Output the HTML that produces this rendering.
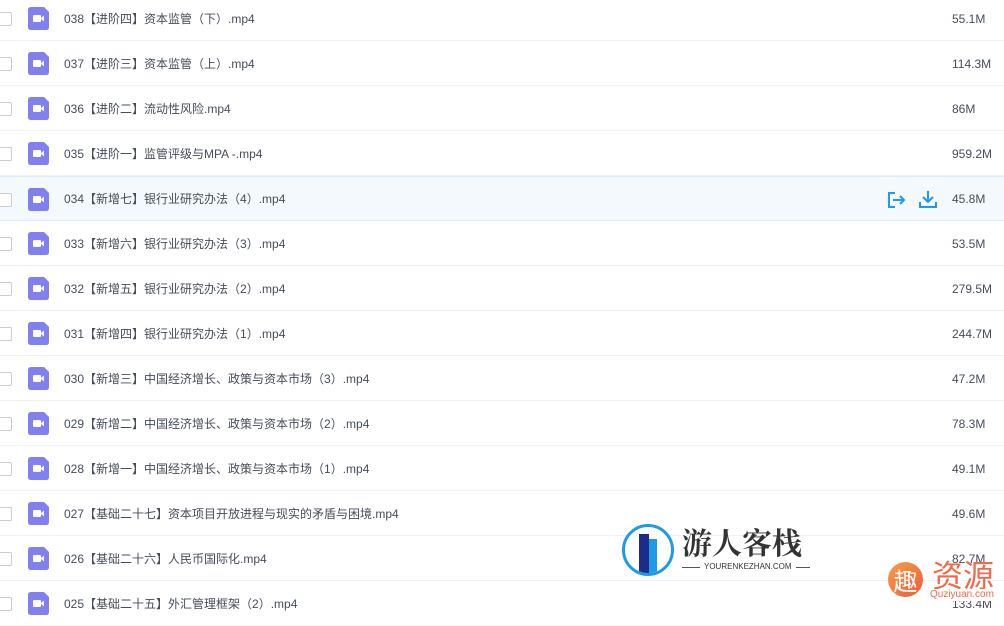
<!DOCTYPE html>
<html><head><meta charset="utf-8"><style>
body{margin:0;width:1004px;height:602px;overflow:hidden;background:#fff;font-family:"Liberation Sans","Noto Sans CJK SC",sans-serif;position:relative}
.row{position:absolute;left:0;width:1004px;height:44px;border-bottom:1px solid #f1f2f5}
.row.hl{background:#f4f9fe;border-top:1px solid #dceefc;border-bottom:1px solid #dceefc;height:43px}
.cb{position:absolute;left:-2px;top:16px;width:12px;height:12px;border:1px solid #c8ccd4;border-radius:2px;background:#fff}
.ic{position:absolute;left:28px;top:11px;width:21px;height:23px}
.t{position:absolute;left:64px;top:15px;font-size:12px;line-height:16px;color:#454d5a;white-space:nowrap}
.s{position:absolute;left:952px;top:15px;font-size:12px;line-height:16px;color:#454d5a}
.hl .t,.hl .s{top:14px}
</style></head><body>
<div id="rows"></div>
<script>
const d=[["038【进阶四】资本监管（下）.mp4","55.1M"],["037【进阶三】资本监管（上）.mp4","114.3M"],["036【进阶二】流动性风险.mp4","86M"],["035【进阶一】监管评级与MPA -.mp4","959.2M"],["034【新增七】银行业研究办法（4）.mp4","45.8M"],["033【新增六】银行业研究办法（3）.mp4","53.5M"],["032【新增五】银行业研究办法（2）.mp4","279.5M"],["031【新增四】银行业研究办法（1）.mp4","244.7M"],["030【新增三】中国经济增长、政策与资本市场（3）.mp4","47.2M"],["029【新增二】中国经济增长、政策与资本市场（2）.mp4","78.3M"],["028【新增一】中国经济增长、政策与资本市场（1）.mp4","49.1M"],["027【基础二十七】资本项目开放进程与现实的矛盾与困境.mp4","49.6M"],["026【基础二十六】人民币国际化.mp4","82.7M"],["025【基础二十五】外汇管理框架（2）.mp4","133.4M"]];
const icon='<svg class="ic" viewBox="0 0 21 23"><path d="M3 0H16L21 5V20Q21 23 18 23H3Q0 23 0 20V3Q0 0 3 0Z" fill="#8080f0"/><rect x="5" y="8" width="8" height="7" rx="1" fill="#fff"/><path d="M13 11L16 8.5V14.5L13 12Z" fill="#fff"/></svg>';
let h='';
d.forEach((r,i)=>{const hl=i==4;h+=`<div class="row${hl?' hl':''}" style="top:${i*45-4}px"><div class="cb"></div>${icon}<div class="t">${r[0]}</div>${hl?'<svg style="position:absolute;left:886px;top:14px" width="20" height="18" viewBox="0 0 20 18" fill="none" stroke="#1e9bf0" stroke-width="2"><path d="M9 2H3V16H9"/><path d="M7 9H18M14 5L18 9L14 13"/></svg><svg style="position:absolute;left:919px;top:13px" width="18" height="19" viewBox="0 0 18 19" fill="none" stroke="#1e9bf0" stroke-width="2"><path d="M9 1V12M4 7L9 12L14 7"/><path d="M1 12V17H17V12"/></svg>':''}<div class="s">${r[1]}</div></div>`});
document.getElementById('rows').innerHTML=h;
</script>
<div style="position:absolute;left:622px;top:524px;width:52px;height:52px;border:3px solid #1e9be6;border-radius:50%;box-sizing:border-box;background:#fff;overflow:hidden"><div style="position:absolute;left:14px;top:7px;width:10px;height:44px;background:#1d2b8a"></div><div style="position:absolute;left:24px;top:12px;width:8px;height:40px;background:#1e9be6"></div></div>
<div style="position:absolute;left:682px;top:524px;font-family:'Noto Serif CJK SC',serif;font-weight:bold;font-size:30px;line-height:34px;color:#333">游人客栈</div>
<div style="position:absolute;left:682px;top:567px;width:128px;height:1px;background:#555"></div>
<div style="position:absolute;left:700px;top:562px;padding:0 4px;background:#fff;font-size:8px;line-height:10px;color:#333">YOURENKEZHAN.COM</div>
<div style="position:absolute;left:888px;top:562px;width:35px;height:35px;border-radius:50%;background:linear-gradient(135deg,#f5a04a,#ee5a3a);color:#fff;font-size:24px;line-height:35px;text-align:center;font-family:'Noto Sans CJK SC',sans-serif">趣</div>
<div style="position:absolute;left:932px;top:556px;font-size:31px;color:#ef6a4a;font-family:'Noto Sans CJK SC',sans-serif;line-height:36px">资源</div>
<div style="position:absolute;left:930px;top:589px;font-size:10px;line-height:12px;color:#ef6a4a;background:#fff">Quziyuan.com</div>
</body></html>
